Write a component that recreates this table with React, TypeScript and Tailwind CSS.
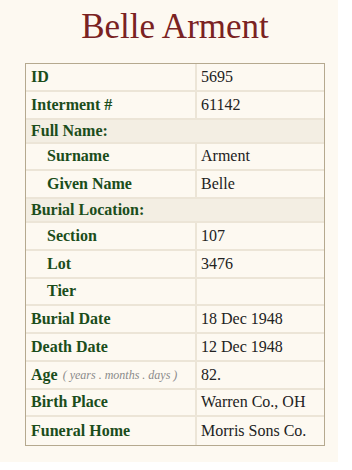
import React from "react";

type Row =
  | { kind: "header"; label: string }
  | { kind: "data"; label: string; value: string; indent?: boolean; hint?: string };

const rows: Row[] = [
  { kind: "data", label: "ID", value: "5695" },
  { kind: "data", label: "Interment #", value: "61142" },
  { kind: "header", label: "Full Name:" },
  { kind: "data", label: "Surname", value: "Arment", indent: true },
  { kind: "data", label: "Given Name", value: "Belle", indent: true },
  { kind: "header", label: "Burial Location:" },
  { kind: "data", label: "Section", value: "107", indent: true },
  { kind: "data", label: "Lot", value: "3476", indent: true },
  { kind: "data", label: "Tier", value: "", indent: true },
  { kind: "data", label: "Burial Date", value: "18 Dec 1948" },
  { kind: "data", label: "Death Date", value: "12 Dec 1948" },
  { kind: "data", label: "Age", value: "82.", hint: "( years . months . days )" },
  { kind: "data", label: "Birth Place", value: "Warren Co., OH" },
  { kind: "data", label: "Funeral Home", value: "Morris Sons Co." },
];

export default function App() {
  return (
    <div className="w-[352px] h-[470px] bg-white">
      <div
        className="w-[338px] h-[462px] bg-[#fdf9f1] pt-[5px]"
        style={{ fontFamily: '"Liberation Serif", "DejaVu Serif", serif' }}
      >
        <h1 className="text-center text-[35px] leading-[44px] text-[#7a2222] pl-[12px]">
          Belle Arment
        </h1>
        <div className="ml-[25px] mt-[14px] w-[300px] border border-[#b5a98f] flex flex-col">
          {rows.map((r, i) => {
            const last = i === rows.length - 1;
            if (r.kind === "header") {
              return (
                <div
                  key={i}
                  className={`h-[24px] bg-[#f3eee3] flex items-center pl-[5px] text-[16px] font-bold text-[#1b4d1b] ${
                    last ? "" : "border-b-2 border-[#ece5d7]"
                  }`}
                >
                  {r.label}
                </div>
              );
            }
            return (
              <div
                key={i}
                className={`h-[27.75px] grid grid-cols-[171px_1fr] ${
                  last ? "" : "border-b-2 border-[#ece5d7]"
                }`}
              >
                <div
                  className={`flex items-center border-r-2 border-[#ece5d7] text-[16px] font-bold text-[#1b4d1b] ${
                    r.indent ? "pl-[21px]" : "pl-[5px]"
                  }`}
                >
                  {r.label}
                  {r.hint && (
                    <span className="ml-[5px] text-[12px] italic font-normal text-[#8a8a8a]">
                      {r.hint}
                    </span>
                  )}
                </div>
                <div className="flex items-center pl-[4px] text-[16px] text-[#222]">{r.value}</div>
              </div>
            );
          })}
        </div>
      </div>
    </div>
  );
}
